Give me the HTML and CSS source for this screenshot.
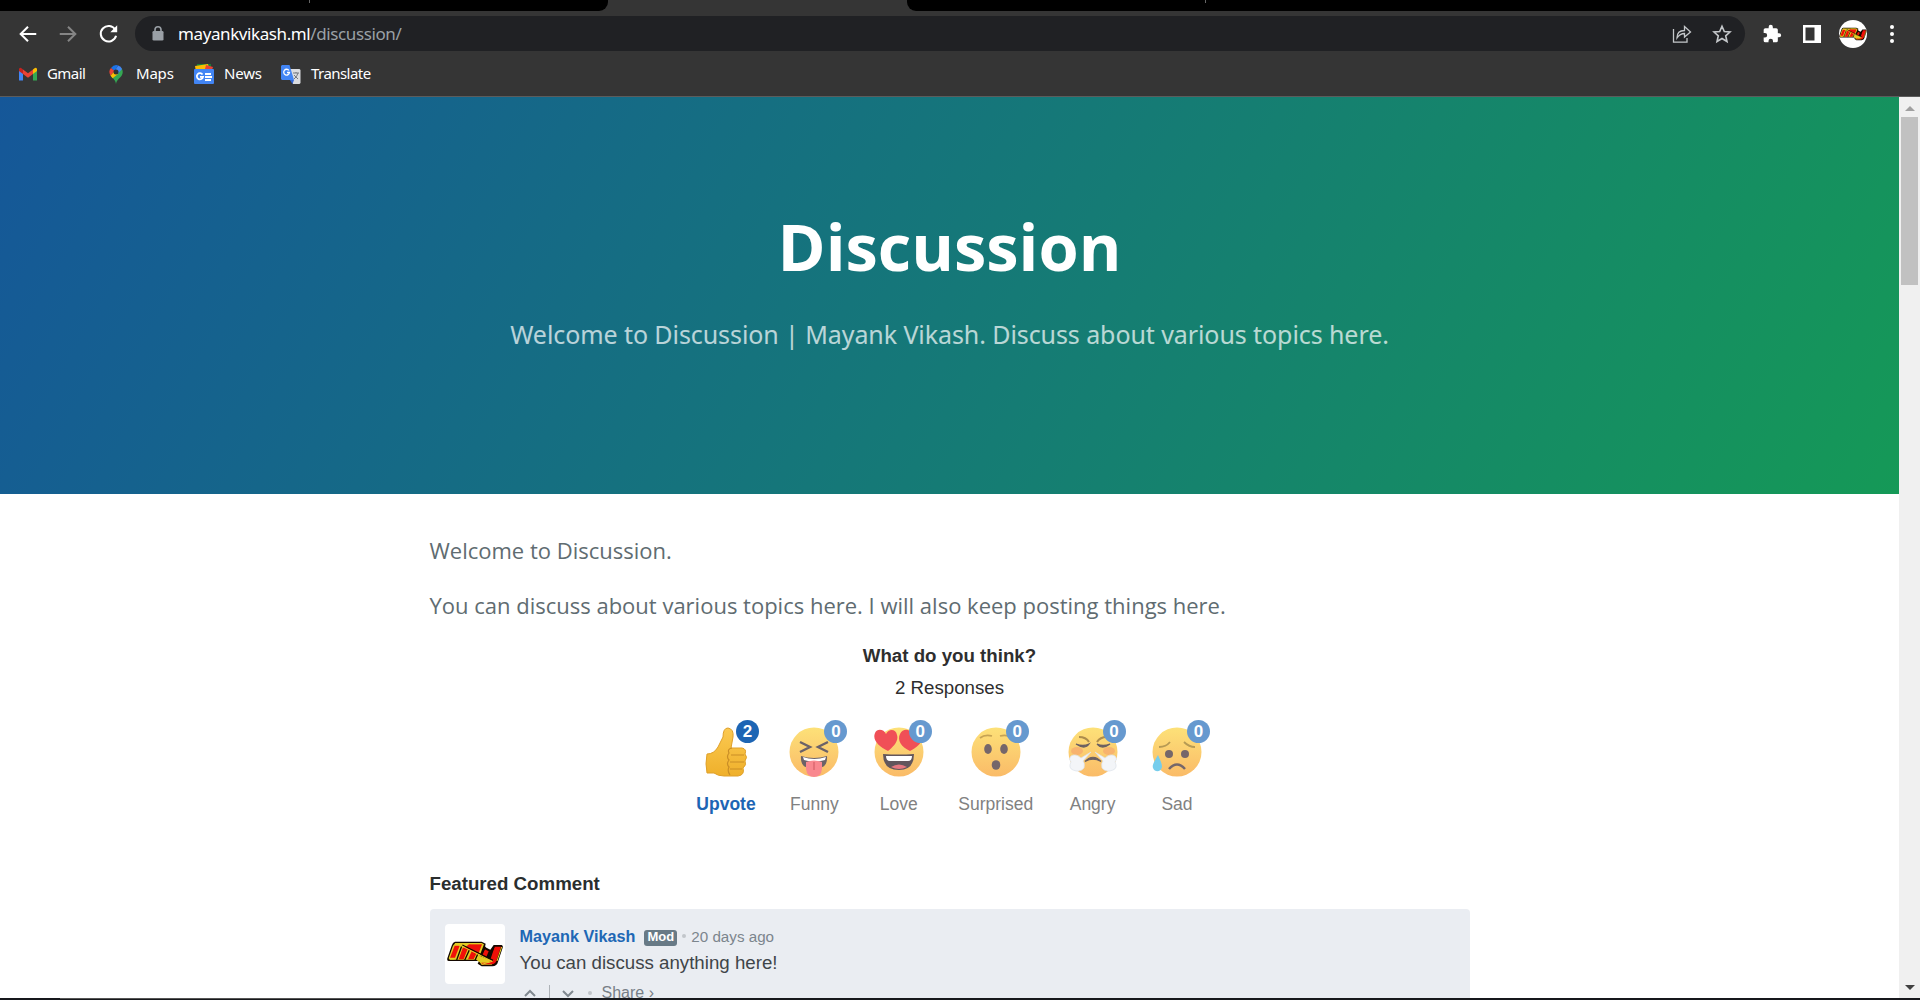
FILE: index.html
```html
<!DOCTYPE html>
<html lang="en">
<head>
<meta charset="utf-8">
<title>Discussion | Mayank Vikash</title>
<link rel="stylesheet" href="styles.css">
</head>
<body>
<svg class="defs" width="0" height="0" aria-hidden="true">
  <defs>
    <linearGradient id="face" x1="0" y1="0" x2="0" y2="1"><stop offset="0" stop-color="#fde178"/><stop offset="1" stop-color="#fabb68"/></linearGradient>
    <linearGradient id="thumb" x1="0" y1="0" x2="0" y2="1"><stop offset="0" stop-color="#fbc951"/><stop offset="1" stop-color="#efb02b"/></linearGradient>
    <symbol id="logo" viewBox="0 0 168 78">
      <path fill="#140800" d="M24 2H104L116 8L114 18L130 26L140 12H164Q169 14 167 20L153 62Q150 75 136 76H104L92 68L96 60H6Q-1 60 1 52L14 14Q17 4 24 2Z"/>
      <path fill="#e3cc24" d="M25 6H104L111 10L98 44L142 62L134 71H104L98 64L88 56H8L5 52L18 14Z"/>
      <g fill="#f01008">
        <path d="M23 14H38L24 50H9Z"/>
        <path d="M48 19L62 24L50 55H35Z"/>
        <path d="M66 10H105L94 40L52 21Z"/>
        <path d="M74 31L88 38L80 55H63Z"/>
        <path d="M143 17H162L148 60Q145 69 134 70H106L103 65H127Z"/>
        <path d="M113 25L125 31L118 48L104 43Z"/>
      </g>
      <g fill="none" stroke="#140800" stroke-width="4">
        <path d="M44 16L29 57M67 27L53 58M92 40L84 58M115 17L103 45M141 18L124 53M46 12L138 58"/>
      </g>
      <path d="M24 7L42 14L136 61L104 70M103 8H70M9 54H23M164 18L150 60" fill="none" stroke="#e3cc24" stroke-width="3"/>
    </symbol>
  </defs>
</svg>

<div class="tabs"><span class="tab tab-left"></span><span class="tab tab-right"></span></div>
<header class="browser">
  <div class="toolbar">
    <svg class="nav" viewBox="0 0 24 24"><path d="M21 12H4M12 4L4 12L12 20"/></svg>
    <svg class="nav dim" viewBox="0 0 24 24"><path d="M3 12H20M12 4L20 12L12 20"/></svg>
    <svg class="nav" viewBox="0 0 24 24"><path d="M20 7.500A8.500 8.500 0 1 0 20.800 14"/><path d="M22 2.500V10H14.500Z" fill="#fff" stroke="none"/></svg>
    <div class="address">
      <svg class="lock" viewBox="0 0 12 15"><rect x=".5" y="5" width="11" height="9.500" rx="1.300" fill="#9aa0a6"/><path d="M3 6V3.800A3 3 0 0 1 9 3.800V6" fill="none" stroke="#9aa0a6" stroke-width="1.600"/></svg>
      <span class="url"><b>mayankvikash.ml</b>/discussion/</span>
      <svg class="share-icon" viewBox="0 0 20 20"><path d="M1.500 5V18.200H15V14M5 14Q5 6.500 12.500 6.500V2.500L18.500 8L12.500 13V9.500Q8 9.500 5 14Z"/></svg>
      <svg class="star" viewBox="0 0 20 20"><path d="M10 2.200L12.300 7.500L18 8L13.700 11.800L15 17.500L10 14.500L5 17.500L6.300 11.800L2 8L7.700 7.500Z"/></svg>
    </div>
    <svg class="puzzle" viewBox="0 0 24 24"><path fill="#fff" d="M20.500 11H19V7a2 2 0 0 0-2-2h-4V3.500a2.500 2.500 0 0 0-5 0V5H4a2 2 0 0 0-2 2v3.800h1.500a2.700 2.700 0 0 1 0 5.400H2V20a2 2 0 0 0 2 2h3.800v-1.500a2.700 2.700 0 0 1 5.400 0V22H17a2 2 0 0 0 2-2v-4h1.500a2.500 2.500 0 0 0 0-5z"/></svg>
    <svg class="panel" viewBox="0 0 18 18"><path fill="#fff" fill-rule="evenodd" d="M0 0H18V18H0ZM2.500 2.500V15.500H11.500V2.500Z"/></svg>
    <span class="profile"><svg><use href="#logo"/></svg></span>
    <svg class="dots" viewBox="0 0 4 18" fill="#fff"><circle cx="2" cy="2" r="2"/><circle cx="2" cy="9" r="2"/><circle cx="2" cy="16" r="2"/></svg>
  </div>
  <nav class="bookmarks">
    <a class="gmail"><svg viewBox="0 0 18 14"><path fill="#4285f4" d="M0 2V13.500H4V5Z"/><path fill="#34a853" d="M18 2V13.500H14V5Z"/><path fill="#fbbc04" d="M14 2.500V7L18 4V2Q17-.6 14 2.500Z"/><path fill="#c5221f" d="M0 2V4L4 7V2.500Q1-.6 0 2Z"/><path fill="#ea4335" d="M4 2.500L9 6.300L14 2.500V7L9 10.700L4 7Z"/></svg><span>Gmail</span></a>
    <a class="maps"><svg viewBox="0 0 14 19"><path fill="#34a853" d="M7 19C6.200 14 3.500 13.500 1.500 10.500L12.700 3.300Q14.600 7 13 10C11 13.500 8 14 7 19Z"/><path fill="#fbbc04" d="M1.500 10.500L5 6.500L9 9L3.600 13.200Z"/><path fill="#1a73e8" d="M2 3L5.500 6L9.200 .4Q5-1 2 3Z"/><path fill="#ea4335" d="M2 3Q-1 6 1.500 10.500L5.500 6Z"/><path fill="#4285f4" d="M9.200 .4Q12 1.300 13 4L8.700 9L5.500 6Z"/><circle cx="7" cy="7" r="2.500" fill="#303134"/></svg><span>Maps</span></a>
    <a class="news"><svg viewBox="0 0 20 20"><path fill="#188038" d="M3 0H17V8H3Z"/><path fill="#fbbc04" d="M1 2L14 0L16 8H2Z"/><path fill="#ea4335" d="M12 1L19 3L17 9H10Z"/><rect y="5" width="20" height="15" rx="1" fill="#4285f4"/><path fill="none" stroke="#fff" stroke-width="1.800" d="M8.500 10.500A3.100 3.100 0 1 0 9 12.800H6M11 10H17M11 13H18M11 16H17"/></svg><span>News</span></a>
    <a class="translate"><svg viewBox="0 0 20 19"><path fill="#dadce0" d="M9 4H18.500L19.500 5V18L18.500 19H12Z"/><path fill="#4285f4" d="M1 0H8.500L13 15H1L0 14V1Z"/><path fill="#3367d6" d="M9 15H13L11.500 19Z"/><path fill="none" stroke="#fff" stroke-width="1.300" d="M8 5.500A2.900 2.900 0 1 0 8.500 7.500H6"/><path fill="none" stroke="#737980" d="M12 8H18M15 7V8M17 8Q16 12 13 14M13 10L17 14"/></svg><span>Translate</span></a>
  </nav>
</header>

<div class="viewport">
  <div class="page">
    <section class="hero">
      <h1>Discussion</h1>
      <h2>Welcome to Discussion | Mayank Vikash. Discuss about various topics here.</h2>
    </section>
    <main class="content">
      <p class="intro">Welcome to Discussion.</p>
      <p class="intro second">You can discuss about various topics here. I will also keep posting things here.</p>
      <section class="poll">
        <h3>What do you think?</h3>
        <p>2 Responses</p>
        <div class="reactions">
          <div class="reaction selected wide">
            <span class="emoji"><svg viewBox="0 0 50 50"><path fill="url(#thumb)" stroke="#dfa02a" stroke-width="1" d="M6 27Q13 27 17 20L22 10Q22 1 27 1Q33 2 32 10L30 21H41Q46 22 44 27Q47 30 44 34Q46 38 42 41Q44 48 37 49H23Q17 49 13 46H6Q4 37 6 27Z"/><path d="M31 21Q26 22 28 26Q25 30 28 33Q25 37 28 40Q26 44 29 48M30 28H43M29 35H43M29 42H41" fill="none" stroke="#c98d27" stroke-width="1.200"/></svg><i>2</i></span><span class="label">Upvote</span>
          </div>
          <div class="reaction">
            <span class="emoji"><svg viewBox="0 0 50 50"><circle cx="25" cy="25" r="24.500" fill="url(#face)"/><path d="M11 15L21 20L11 25M39 15L29 20L39 25" fill="none" stroke="#6b6268" stroke-width="2.400"/><path fill="#6b6268" d="M12 29Q25 33 38 29Q39 40 30 41H20Q11 40 12 29Z"/><path fill="#fff" d="M14 30Q25 34 37 30L36 33Q25 36 15 33Z"/><path fill="#f9888f" d="M17 35Q25 32 33 35V42Q32 50 25 50Q18 50 17 42Z"/><path d="M25 35V43" stroke="#dc6870" stroke-width="1.500"/></svg><i>0</i></span><span class="label">Funny</span>
          </div>
          <div class="reaction">
            <span class="emoji"><svg viewBox="0 0 50 50"><circle cx="25" cy="25" r="24.500" fill="url(#face)"/><g fill="#f04f57"><path d="M14 24C5 20-2 13 1 6C3 1 10 2 12 7C15 1 22 2 23 8C25 14 19 20 14 24Z"/><path d="M36 24C27 20 23 13 26 7C29 1 36 2 38 7C41 1 48 3 49 8C50 15 42 21 36 24Z"/></g><path fill="#62565c" d="M9 27Q25 28 40 27Q40 43 25 43Q9 43 9 27Z"/><path fill="#fff" d="M12 29H38Q38 34 34 34H16Q12 34 12 29Z"/><path fill="#e67880" d="M17 40Q25 35 33 40Q25 44 17 40Z"/></svg><i>0</i></span><span class="label">Love</span>
          </div>
          <div class="reaction surprised">
            <span class="emoji"><svg viewBox="0 0 50 50"><circle cx="25" cy="25" r="24.500" fill="url(#face)"/><g fill="#75666a"><ellipse cx="17" cy="22" rx="3.800" ry="5"/><ellipse cx="33" cy="22" rx="3.800" ry="5"/><ellipse cx="25" cy="38" rx="4.300" ry="4.800"/></g><path d="M9 11Q14 7 21 9M29 9Q36 7 41 11" fill="none" stroke="#c6a354" stroke-width="1.800"/></svg><i>0</i></span><span class="label">Surprised</span>
          </div>
          <div class="reaction">
            <span class="emoji"><svg viewBox="0 0 50 50"><circle cx="25" cy="25" r="24.500" fill="url(#face)"/><g fill="#f6a26e" opacity=".6"><ellipse cx="9" cy="24" rx="6" ry="4"/><ellipse cx="41" cy="24" rx="6" ry="4"/></g><path d="M8 17Q15 20 21 17Q17 23 8 17M29 17Q35 20 42 17Q34 23 29 17" fill="#6b6062" stroke="#6b6062" stroke-width="1.300"/><path d="M11 10Q18 10 21 15M29 15Q32 10 39 10" fill="none" stroke="#ad8d4c" stroke-width="2"/><path d="M23 25L13 31Q8 26 3 29Q0 32 3 35Q0 41 5 43Q12 46 16 41Q17 36 15 34ZM27 25L37 31Q42 26 47 29Q50 32 47 35Q50 41 45 43Q38 46 34 41Q33 36 35 34Z" fill="#f3f5f8" stroke="#dce3e9" stroke-width=".7"/><path d="M17 34.500Q25 26 33 34.500Q25 30 17 34.500Z" fill="#6b6062" stroke="#6b6062" stroke-width="1.200"/></svg><i>0</i></span><span class="label">Angry</span>
          </div>
          <div class="reaction">
            <span class="emoji"><svg viewBox="0 0 50 50"><circle cx="25" cy="25" r="24.500" fill="url(#face)"/><g fill="#75666a"><circle cx="17" cy="27" r="4"/><circle cx="33" cy="27" r="4"/></g><path d="M17 42Q25 33 33 42" fill="none" stroke="#75666a" stroke-width="2.500"/><path d="M7 20Q14 20 18 15M32 15Q37 20 43 20" fill="none" stroke="#b69a54" stroke-width="1.800"/><path d="M6 28C2 35 0 38 1 41C3 46 9 45 10 40C10 36 8 33 6 28Z" fill="#76cdec"/></svg><i>0</i></span><span class="label">Sad</span>
          </div>
        </div>
      </section>
      <section class="featured">
        <h3>Featured Comment</h3>
        <article class="comment">
          <div class="avatar"><svg><use href="#logo"/></svg></div>
          <div class="body">
            <div class="meta"><b>Mayank Vikash</b><span class="mod">Mod</span><span class="bullet"></span><time>20 days ago</time></div>
            <p>You can discuss anything here!</p>
            <div class="actions"><svg viewBox="0 0 14 9"><path d="M2 7L7 2L12 7"/></svg><span class="bar"></span><svg viewBox="0 0 14 9"><path d="M2 2L7 7L12 2"/></svg><span class="bullet"></span><span class="share">Share ›</span></div>
          </div>
        </article>
      </section>
    </main>
  </div>
  <div class="scrollbar"><span class="arrow up"></span><span class="thumb"></span><span class="arrow down"></span></div>
</div>
<footer class="bottom"><span></span></footer>
</body>
</html>
```
FILE: styles.css
```css
* { box-sizing: border-box; }
body { margin: 0; height: 1000px; overflow: hidden; display: flex; flex-direction: column; background: #fff; font-family: "Liberation Sans", Arial, sans-serif; }
h1, h2, h3, p { margin: 0; }
svg { display: block; flex: none; }
.defs { position: absolute; }

.tabs { height: 11px; flex: none; display: flex; justify-content: space-between; background: #353535; }
.tab { background: #000; height: 11px; display: flex; }
.tab-left { width: 608px; border-bottom-right-radius: 9px; padding-left: 309px; }
.tab-right { width: 1013px; border-bottom-left-radius: 9px; padding-left: 298px; }
.tab::before { content: ""; width: 1px; height: 3px; background: #666; }

.browser { height: 86px; flex: none; background: #353535; border-bottom: 1px solid #5c5c5c; font-family: "Noto Sans", sans-serif; color: #fff; }
.toolbar { height: 45px; display: flex; align-items: center; padding: 0 26px 0 17px; }
.nav { width: 22px; height: 22px; margin-right: 18px; fill: none; stroke: #fff; stroke-width: 2.200; }
.nav.dim { stroke: #858585; }
.address { width: 1610px; height: 35px; margin-left: -2px; border-radius: 18px; background: #202124; display: flex; align-items: center; padding: 0 13px 0 17px; }
.lock { width: 12px; height: 15px; margin-right: 14px; }
.url { font-size: 17px; letter-spacing: -.4px; color: #9aa0a6; white-space: nowrap; }
.url b { font-weight: 400; color: #fff; }
.share-icon, .star { width: 20px; height: 20px; fill: none; stroke: #c4c7ca; stroke-width: 1.300; }
.share-icon { margin-left: auto; margin-right: 20px; }
.star { stroke-width: 1.600; }
.puzzle { width: 20px; height: 20px; margin-left: 17px; }
.panel { width: 18px; height: 18px; margin-left: 21px; }
.profile { width: 28px; height: 28px; margin-left: 18px; border-radius: 50%; background: #fff; display: flex; align-items: center; overflow: hidden; }
.profile svg { width: 28px; height: 18px; }
.dots { width: 4px; height: 18px; margin-left: auto; }

.bookmarks { height: 36px; display: flex; align-items: center; padding-left: 19px; font-size: 15px; letter-spacing: -.55px; }
.bookmarks a { display: flex; align-items: center; }
.bookmarks span { margin-top: -2px; }
.gmail { width: 90px; gap: 10px; }
.maps { width: 85px; gap: 13px; }
.news { width: 87px; gap: 10px; }
.translate { gap: 10px; }
.maps span, .news span { letter-spacing: -.2px; }
.gmail svg { width: 18px; height: 14px; }
.maps svg { width: 14px; height: 19px; }
.news svg { width: 20px; height: 20px; }
.translate svg { width: 20px; height: 19px; }

.viewport { flex: 1; min-height: 0; display: flex; }
.page { width: 1899px; overflow: hidden; }
.hero { height: 397px; padding-top: 104px; text-align: center; color: #fff; background: linear-gradient(120deg, #155799, #159957); font-family: "Open Sans", sans-serif; }
.hero h1 { font-size: 65px; line-height: 90px; font-weight: 700; }
.hero h2 { margin-top: 23px; font-family: "Noto Sans", sans-serif; font-size: 25px; letter-spacing: -.08px; line-height: 40px; font-weight: 400; opacity: .7; }

.content { width: 1040px; margin: 0 auto; padding-top: 38px; }
.intro { font-family: "Open Sans", sans-serif; font-size: 22px; line-height: 36px; color: #606c71; white-space: nowrap; }
.second { margin-top: 19px; }
.poll { text-align: center; padding-top: 19px; color: #2e2e2e; }
.poll h3 { font-size: 18.700px; line-height: 28px; }
.poll p { font-size: 18.700px; line-height: 28px; margin-top: 4px; }
.reactions { display: flex; justify-content: center; gap: 34.400px; margin-top: 25px; }
.reaction { width: 50px; display: flex; flex-direction: column; align-items: center; }
.reaction.wide { width: 58px; }
.reaction.surprised { width: 75px; }
.emoji { position: relative; width: 50px; height: 50px; }
.emoji svg { width: 50px; height: 50px; }
.emoji i { position: absolute; top: -7px; left: 35px; width: 23px; height: 23px; border-radius: 50%; background: #6699cf; color: #fff; font-size: 17px; font-style: normal; font-weight: 700; line-height: 23px; }
.selected .emoji i { background: #1d65b4; }
.label { margin-top: 15px; font-size: 17.500px; line-height: 24px; color: #818181; }
.selected .label { font-weight: 700; color: #1d65b4; }

.featured { padding-top: 55px; color: #2a2e2e; }
.featured h3 { font-size: 18.700px; line-height: 26px; }
.comment { height: 110px; margin-top: 12px; padding: 15px; background: #eaedf2; border-radius: 4px 4px 0 0; display: flex; gap: 15px; }
.avatar { width: 60px; height: 60px; background: #fff; border-radius: 4px; display: flex; align-items: center; justify-content: center; }
.avatar svg { width: 56px; height: 26px; }
.meta { height: 24px; display: flex; align-items: center; color: #7c858d; font-size: 15.200px; white-space: nowrap; }
.meta b { color: #2067b5; font-size: 16.200px; }
.mod { width: 33px; height: 16px; margin: 4px 5px 0 9px; border-radius: 3px; background: #687a86; color: #fff; font-size: 13px; line-height: 14px; font-weight: 700; text-align: center; }
.bullet { width: 4px; height: 4px; border-radius: 50%; background: #c2c6cb; margin-right: 5px; }
.body p { margin-top: 1px; font-size: 18.700px; line-height: 28px; color: #3f4549; white-space: nowrap; }
.actions { height: 30px; display: flex; align-items: center; margin-top: 1px; padding-left: 3px; color: #777f87; font-size: 16px; }
.actions svg { width: 14px; height: 9px; fill: none; stroke: #818990; stroke-width: 2; }
.bar { width: 1px; height: 16px; background: #adb2b7; margin: 0 11px 0 12px; }
.actions .bullet { margin: 0 10px 0 13px; }

.scrollbar { width: 21px; background: #f0f0f0; display: flex; flex-direction: column; align-items: center; padding: 9px 0 8px; }
.arrow { border: 5px solid transparent; border-top: 0; border-bottom: 5px solid #a0a0a0; }
.arrow.down { border-bottom: 0; border-top: 5px solid #404040; margin-top: auto; }
.thumb { width: 17px; height: 168px; margin-top: 6px; background: #c1c1c1; }
.bottom { height: 2px; flex: none; background: #17181c; padding-left: 60px; }
.bottom span { display: block; width: 430px; height: 1px; background: #555; }
```
